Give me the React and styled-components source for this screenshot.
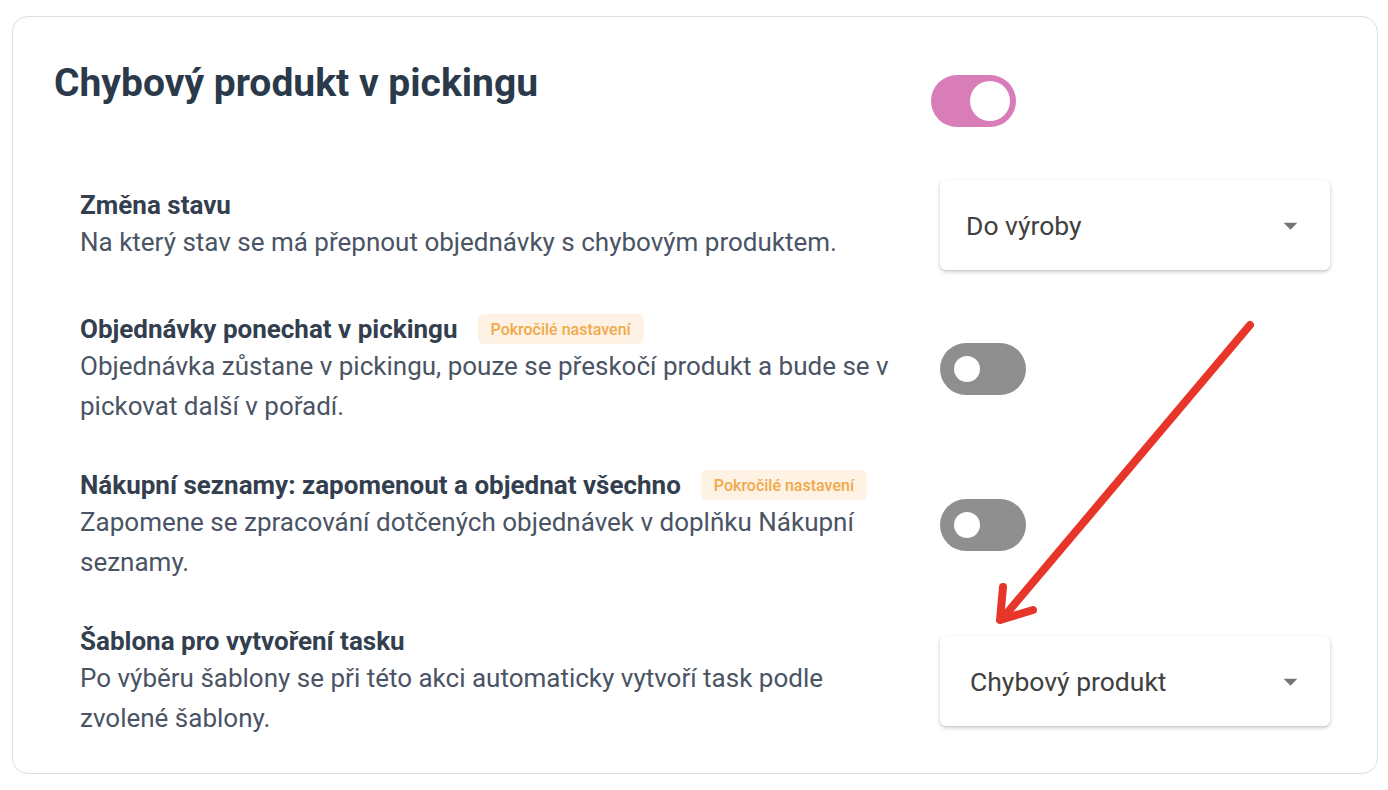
import React from 'react'
import styled, { createGlobalStyle } from 'styled-components'

const GlobalStyle = createGlobalStyle`
  html, body {
    margin: 0;
    padding: 0;
    background: #ffffff;
    font-family: Roboto, "Noto Sans", Arial, sans-serif;
  }
`

const Page = styled.div`
  padding: 16px 10px 16px 12px;
`

const Card = styled.section`
  position: relative;
  box-sizing: border-box;
  height: 758px;
  border: 1px solid #dedede;
  border-radius: 16px;
  padding: 43px 47px 0 41px;
`

const Header = styled.div`
  display: grid;
  grid-template-columns: 1fr 390px;
  align-items: start;
`

const Title = styled.h1`
  margin: 0;
  font-size: 39px;
  line-height: 46px;
  font-weight: 700;
  color: #2b3a4b;
`

const Rows = styled.div`
  display: flex;
  flex-direction: column;
  gap: 42px;
  margin-top: 53px;
  padding-left: 26px;
`

const Row = styled.div`
  display: grid;
  grid-template-columns: 1fr 390px;
  align-items: center;
`

const Info = styled.div`
  display: flex;
  flex-direction: column;
  padding-right: 40px;
`

const LabelLine = styled.div`
  display: flex;
  align-items: center;
  gap: 20px;
  height: 34px;
`

const Label = styled.span`
  font-size: 26px;
  font-weight: 700;
  color: #333f4f;
`

const Badge = styled.span`
  display: inline-flex;
  align-items: center;
  height: 30px;
  padding: 0 13px;
  border-radius: 6px;
  background: #fdf2e3;
  color: #f2a94a;
  font-size: 16px;
  font-weight: 500;
`

const Description = styled.p`
  margin: 0;
  font-size: 26px;
  line-height: 40px;
  color: #4a5464;
`

const SwitchTrack = styled.span`
  position: relative;
  display: block;
  width: ${p => (p.$on ? 85 : 86)}px;
  height: 52px;
  border-radius: 26px;
  background: ${p => (p.$on ? '#d87db8' : '#8f8f8f')};
  margin-left: ${p => (p.$on ? '-9px' : '0')};
  margin-top: ${p => (p.$on ? '15px' : '0')};
`

const SwitchKnob = styled.span`
  position: absolute;
  top: 50%;
  border-radius: 50%;
  background: #ffffff;
  transform: translateY(-50%);
  width: ${p => (p.$on ? 40 : 26)}px;
  height: ${p => (p.$on ? 40 : 26)}px;
  left: ${p => (p.$on ? '39px' : '14px')};
`

const Select = styled.div`
  display: flex;
  align-items: center;
  justify-content: space-between;
  box-sizing: border-box;
  height: 90px;
  padding: 0 23px 0 ${p => p.$pad || 26}px;
  border-radius: 6px;
  background: #ffffff;
  box-shadow: 0 2px 4px rgba(0, 0, 0, 0.18), 0 1px 2px rgba(0, 0, 0, 0.08);
  color: #404040;
  font-size: 26.5px;
`

const Arrow = styled.svg`
  position: absolute;
  left: 0;
  top: 0;
  pointer-events: none;
`

const Switch = ({ on }) => (
  <SwitchTrack $on={on}>
    <SwitchKnob $on={on} />
  </SwitchTrack>
)

const Caret = () => (
  <svg width="33" height="33" viewBox="0 0 24 24">
    <path d="M7 10l5 5 5-5z" fill="#757575" />
  </svg>
)

const rows = [
  {
    label: 'Změna stavu',
    text: 'Na který stav se má přepnout objednávky s chybovým produktem.',
    select: 'Do výroby',
  },
  {
    label: 'Objednávky ponechat v pickingu',
    badge: true,
    text: 'Objednávka zůstane v pickingu, pouze se přeskočí produkt a bude se v pickovat další v pořadí.',
  },
  {
    label: 'Nákupní seznamy: zapomenout a objednat všechno',
    badge: true,
    text: 'Zapomene se zpracování dotčených objednávek v doplňku Nákupní seznamy.',
  },
  {
    label: 'Šablona pro vytvoření tasku',
    text: 'Po výběru šablony se při této akci automaticky vytvoří task podle zvolené šablony.',
    select: 'Chybový produkt',
    pad: 30,
  },
]

export default function App() {
  return (
    <Page>
      <GlobalStyle />
      <Card>
        <Header>
          <Title>Chybový produkt v pickingu</Title>
          <div>
            <Switch on />
          </div>
        </Header>
        <Rows>
          {rows.map(r => (
            <Row key={r.label}>
              <Info>
                <LabelLine>
                  <Label>{r.label}</Label>
                  {r.badge && <Badge>Pokročilé nastavení</Badge>}
                </LabelLine>
                <Description>{r.text}</Description>
              </Info>
              <div>
                {r.select ? (
                  <Select $pad={r.pad}>
                    <span>{r.select}</span>
                    <Caret />
                  </Select>
                ) : (
                  <Switch />
                )}
              </div>
            </Row>
          ))}
        </Rows>
        <Arrow width="1366" height="758" viewBox="0 0 1366 758">
          <g
            fill="none"
            stroke="#e8352a"
            strokeWidth="8"
            strokeLinecap="round"
            strokeLinejoin="round"
          >
            <path d="M1237 308 L989 602" />
            <path d="M990 570 L987 603 L1020 593" />
          </g>
        </Arrow>
      </Card>
    </Page>
  )
}
